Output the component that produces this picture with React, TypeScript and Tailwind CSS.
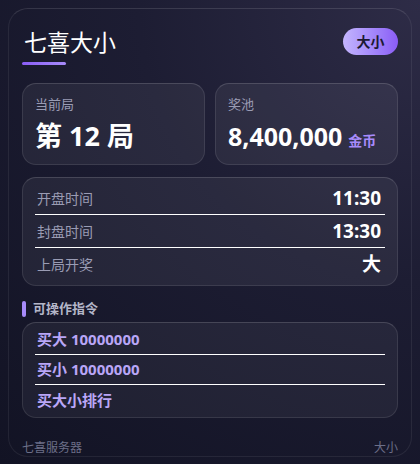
import React from 'react';

const font = { fontFamily: '"Noto Sans", "Noto Sans CJK SC", sans-serif' };

const infoRows = [
  { label: '开盘时间', value: '11:30' },
  { label: '封盘时间', value: '13:30' },
  { label: '上局开奖', value: '大' },
];

const commands = ['买大 10000000', '买小 10000000', '买大小排行'];

function StatCard({ label, children }: { label: string; children: React.ReactNode }) {
  return (
    <div className="h-[82px] rounded-[14px] border border-white/10 border-t-white/15 bg-white/[0.06] px-[12px] pt-[11px]">
      <div className="text-[13px] leading-[18px] text-[#9a9cb4]">{label}</div>
      <div className="mt-[6px] flex items-baseline">{children}</div>
    </div>
  );
}

export default function App() {
  return (
    <div
      className="min-h-[464px] w-[420px] bg-[radial-gradient(circle_at_100%_0%,#2e2c47_0%,#1d1d33_45%,#121324_100%)] p-2 pb-0"
      style={font}
    >
      <div className="flex flex-col rounded-[20px] border border-white/[0.07] border-t-white/[0.12] px-[13px] pt-[19px]">
        <div className="flex items-start justify-between">
          <div>
            <div className="pl-[2px] text-[23px] leading-[29px] text-white">七喜大小</div>
            <div className="mt-[5px] h-[3px] w-[44px] rounded-full bg-gradient-to-r from-[#8b5cf6] to-[#a78bfa]" />
          </div>
          <div className="flex h-[27px] w-[55px] items-center justify-center rounded-full bg-gradient-to-r from-[#c4b5fd] to-[#8b5cf6] text-[14px] font-bold text-[#1c1a33]">
            大小
          </div>
        </div>

        <div className="mt-[18px] grid grid-cols-2 gap-[10px]">
          <StatCard label="当前局">
            <span className="text-[27px] font-bold leading-[34px] text-white">第 12 局</span>
          </StatCard>
          <StatCard label="奖池">
            <span className="text-[25px] font-bold leading-[34px] text-white">8,400,000</span>
            <span className="ml-[6px] text-[14px] font-bold text-[#a78bfa]">金币</span>
          </StatCard>
        </div>

        <div className="mt-[12px] rounded-[14px] border border-white/10 border-t-white/15 bg-white/[0.06] px-[12px] py-[4px]">
          {infoRows.map((row, i) => (
            <div
              key={row.label}
              className={`flex h-[33px] items-center justify-between pl-[2px] pr-[4px] ${
                i < infoRows.length - 1 ? 'border-b border-white' : ''
              }`}
            >
              <span className="text-[14px] text-[#9a9cb4]">{row.label}</span>
              <span className="text-[19px] font-bold text-white">{row.value}</span>
            </div>
          ))}
        </div>

        <div className="mt-[15px] flex h-[16px] items-center gap-[7px]">
          <span className="h-[16px] w-[4px] rounded-full bg-[#a78bfa]" />
          <span className="text-[13px] font-bold text-[#b4b6c8]">可操作指令</span>
        </div>

        <div className="mt-[5px] rounded-[14px] border border-white/10 border-t-white/15 bg-white/[0.05] px-[12px] py-[2px]">
          {commands.map((cmd, i) => (
            <div
              key={cmd}
              className={`flex h-[30px] items-center pl-[2px] text-[15px] font-bold text-[#b9a6f7] ${
                i < commands.length - 1 ? 'border-b border-white' : ''
              }`}
            >
              {cmd}
            </div>
          ))}
        </div>

        <div className="mt-[22px] flex justify-between text-[12px] leading-[16px] text-[#6c6f88]">
          <span>七喜服务器</span>
          <span>大小</span>
        </div>
      </div>
    </div>
  );
}
